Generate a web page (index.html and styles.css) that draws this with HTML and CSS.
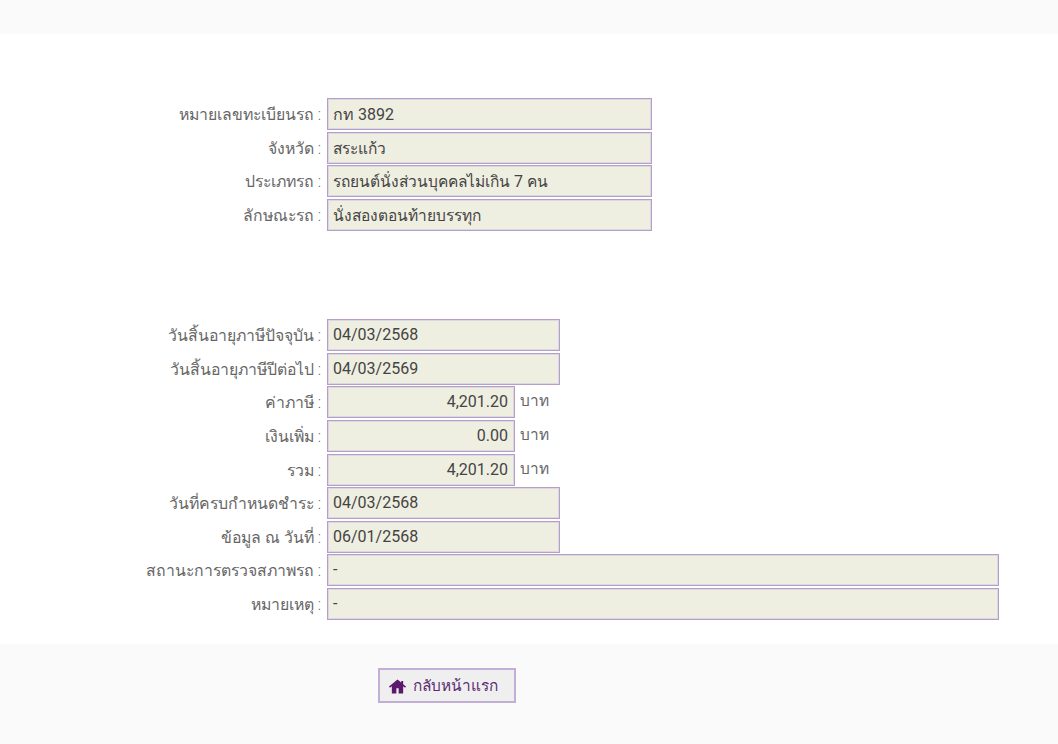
FILE: index.html
```html
<!DOCTYPE html>
<html lang="th">
<head>
<meta charset="utf-8">
<title>ข้อมูลรถ</title>
<link rel="stylesheet" href="styles.css">
</head>
<body>
<header class="top"></header>
<main class="content">
  <section class="group first">
    <div class="row"><span class="label">หมายเลขทะเบียนรถ :</span><div class="field wide">กท 3892</div></div>
    <div class="row"><span class="label">จังหวัด :</span><div class="field wide"><span class="th">สระแก้ว</span></div></div>
    <div class="row"><span class="label">ประเภทรถ :</span><div class="field wide"><span class="th">รถยนต์นั่งส่วนบุคคลไม่เกิน</span> 7 <span class="th">คน</span></div></div>
    <div class="row"><span class="label">ลักษณะรถ :</span><div class="field wide"><span class="th">นั่งสองตอนท้ายบรรทุก</span></div></div>
  </section>
  <section class="group second">
    <div class="row"><span class="label">วันสิ้นอายุภาษีปัจจุบัน :</span><div class="field date">04/03/2568</div></div>
    <div class="row"><span class="label">วันสิ้นอายุภาษีปีต่อไป :</span><div class="field date">04/03/2569</div></div>
    <div class="row"><span class="label">ค่าภาษี :</span><div class="field money">4,201.20</div><span class="unit">บาท</span></div>
    <div class="row"><span class="label">เงินเพิ่ม :</span><div class="field money">0.00</div><span class="unit">บาท</span></div>
    <div class="row"><span class="label">รวม :</span><div class="field money">4,201.20</div><span class="unit">บาท</span></div>
    <div class="row"><span class="label">วันที่ครบกำหนดชำระ :</span><div class="field date">04/03/2568</div></div>
    <div class="row"><span class="label">ข้อมูล ณ วันที่ :</span><div class="field date">06/01/2568</div></div>
    <div class="row"><span class="label">สถานะการตรวจสภาพรถ :</span><div class="field full">-</div></div>
    <div class="row"><span class="label">หมายเหตุ :</span><div class="field full">-</div></div>
  </section>
</main>
<footer class="bottom">
  <a class="home-btn" href="#">
    <svg class="home-icon" viewBox="0 0 18 15" aria-hidden="true"><path fill-rule="evenodd" d="M9 0 0 7.6 1 8.8 3 7.3V15H15V7.3L17 8.8 18 7.6 15 5V1.6H13V3.3ZM7.8 9.4H10.2V15H7.8Z"/></svg>
    <span>กลับหน้าแรก</span>
  </a>
</footer>
</body>
</html>
```
FILE: styles.css
```css
* { box-sizing: border-box; }
html, body { margin: 0; padding: 0; }
body {
  width: 1058px;
  height: 744px;
  overflow: hidden;
  background: #fff;
  color: #444;
  font-family: Roboto, "Noto Sans", sans-serif;
  font-size: 16px;
  display: flex;
  flex-direction: column;
}
.top { height: 34px; background: #fafafa; flex: none; }
.content { flex: 1; }
.group { display: flex; flex-direction: column; }
.first { margin-top: 64.2px; }
.second { margin-top: 86.7px; }
.row { display: flex; align-items: flex-start; height: 33.6px; }
.label {
  width: 327px;
  padding-right: 6px;
  text-align: right;
  color: #666;
  font-size: 15.8px;
  font-weight: 300;
  line-height: 33px;
  white-space: nowrap;
}
.th { font-size: 15.5px; font-weight: 300; }
.field {
  height: 32px;
  line-height: 31px;
  padding: 0 6px 0 5px;
  background: #efefe1;
  border: 1px solid #b39fca;
  box-shadow: inset 0 0 0 1px #dcd8e0;
  color: #444;
  white-space: nowrap;
}
.second .field { line-height: 29.5px; }
.wide { width: 325px; }
.date { width: 233px; }
.money { width: 188px; text-align: right; }
.full { width: 672px; }
.unit { margin-left: 5px; font-size: 15.4px; font-weight: 300; line-height: 30px; color: #666; }
.bottom {
  flex: none;
  height: 100px;
  background: #fafafa;
  padding: 24px 0 0 378px;
}
.home-btn {
  display: inline-flex;
  align-items: center;
  gap: 7px;
  width: 138px;
  height: 35px;
  padding-left: 9px;
  background: #f0eff0;
  border: 2px solid #c3afd6;
  color: #5b2d70;
  font-size: 15.4px;
  font-weight: 300;
  text-decoration: none;
}
.home-icon { width: 17px; height: 15px; fill: #5a1a6c; flex: none; margin-top: 1px; }
```
